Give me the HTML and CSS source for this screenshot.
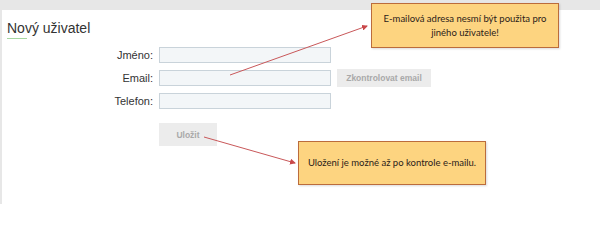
FILE: index.html
```html
<!DOCTYPE html>
<html lang="cs">
<head>
<meta charset="utf-8">
<title>Nový uživatel</title>
<link rel="stylesheet" href="styles.css">
</head>
<body>
<div class="panel">
  <h1 class="title">Nový uživatel</h1>
  <div class="title-line"></div>
  <form class="form">
    <label class="label" for="jmeno">Jméno:</label>
    <input class="input" id="jmeno" type="text">
    <span></span>
    <label class="label" for="email">Email:</label>
    <input class="input" id="email" type="text">
    <button class="btn btn-check" type="button">Zkontrolovat email</button>
    <label class="label" for="tel">Telefon:</label>
    <input class="input" id="tel" type="text">
    <span></span>
    <span></span>
    <button class="btn btn-save" type="button">Uložit</button>
  </form>
</div>

<svg class="arrows" width="600" height="204" viewBox="0 0 600 204">
  <defs>
    <marker id="ah" markerWidth="6" markerHeight="6" refX="5" refY="3" orient="auto" markerUnits="userSpaceOnUse">
      <path d="M0,0 L6,3 L0,6 Z" fill="#c9484a"/>
    </marker>
  </defs>
  <line x1="230" y1="75" x2="367" y2="26" stroke="#c9585a" stroke-width="1" marker-end="url(#ah)"/>
  <line x1="204" y1="137" x2="295" y2="163" stroke="#c9585a" stroke-width="1" marker-end="url(#ah)"/>
</svg>

<div class="callout callout-email">E-mailová adresa nesmí být použita pro<br>jiného uživatele!</div>
<div class="callout callout-save">Uložení je možné až po kontrole e-mailu.</div>
</body>
</html>
```
FILE: styles.css
```css
html, body {
  margin: 0;
  padding: 0;
}
html {
  background: #ffffff;
}
body {
  background: #e7e7e7;
  width: 600px;
  min-height: 204px;
  position: relative;
  font-family: "Liberation Sans", Arial, sans-serif;
}
.panel {
  margin: 10px 0 0 2px;
  background: #ffffff;
  min-height: 194px;
  padding: 10px 0 0 5px;
  box-sizing: border-box;
}
.title {
  margin: 0;
  font-size: 14px;
  font-weight: normal;
  line-height: 16px;
  color: #333;
}
.title-line {
  width: 20px;
  height: 1px;
  background: #a6d6a0;
  margin-top: 2px;
}
.form {
  display: grid;
  grid-template-columns: 146px 172px auto;
  grid-template-rows: 16px 18px 16px 23px;
  column-gap: 6px;
  row-gap: 6px;
  align-items: center;
  margin-top: 8px;
}
.label {
  text-align: right;
  font-size: 11px;
  color: #333;
  line-height: 16px;
}
.input {
  box-sizing: border-box;
  width: 172px;
  height: 16px;
  margin: 0;
  padding: 0;
  border: 1px solid #c9d3da;
  background: #f3f6f8;
}
.btn {
  box-sizing: border-box;
  margin: 0;
  border: none;
  background: #ececec;
  color: #a9a9a9;
  font-family: "Liberation Sans", Arial, sans-serif;
  font-weight: bold;
  font-size: 8.5px;
  padding: 0;
}
.btn-check {
  width: 94px;
  height: 18px;
  justify-self: start;
}
.btn-save {
  width: 58px;
  height: 23px;
  margin-top: 8px;
  align-self: start;
}
.arrows {
  position: absolute;
  left: 0;
  top: 0;
}
.callout {
  position: absolute;
  box-sizing: border-box;
  width: 188px;
  background: #fdd480;
  border: 1.5px solid #bb6c3c;
  box-shadow: 1px 1px 2px rgba(0,0,0,0.15);
  color: #2b2118;
  font-family: Lato, "Open Sans", sans-serif;
  font-size: 9.5px;
  line-height: 14px;
  text-align: center;
  display: flex;
  align-items: center;
  justify-content: center;
}
.callout-email {
  left: 371px;
  top: 3px;
  height: 45px;
}
.callout-save {
  left: 298px;
  top: 141px;
  height: 44px;
}
```
